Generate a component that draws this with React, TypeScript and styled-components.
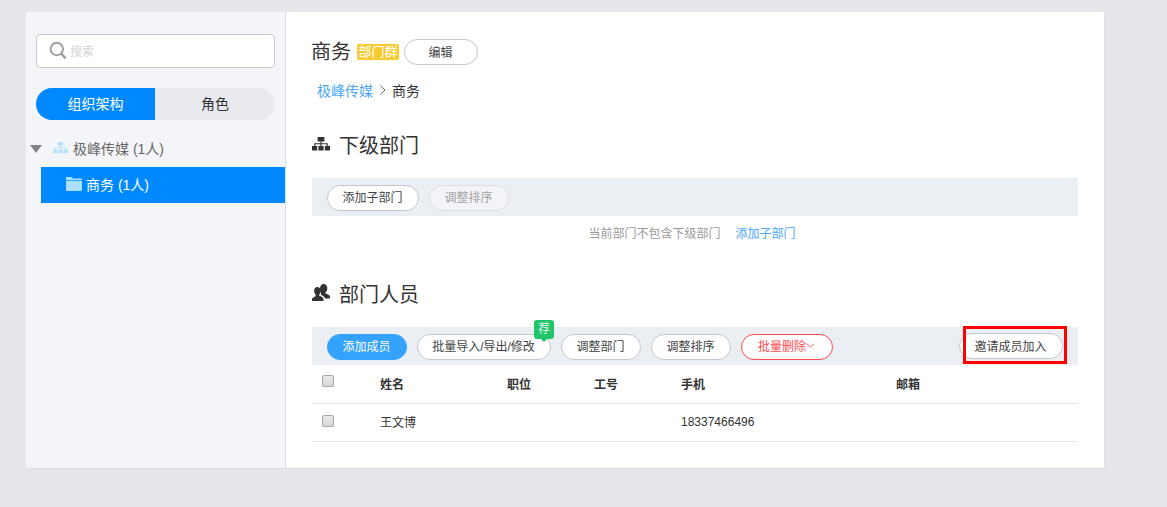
import React from "react";
import styled, { createGlobalStyle } from "styled-components";

const Global = createGlobalStyle`
  html, body { margin: 0; padding: 0; background: #e5e7eb; }
  body { font-family: "Liberation Sans", "Noto Sans CJK SC", sans-serif; color: #333; }
  * { box-sizing: border-box; }
`;

const Page = styled.div`
  width: 1167px;
  height: 507px;
  padding: 12px 0 0 26px;
  overflow: hidden;
`;
const Panel = styled.div`
  width: 1079px;
  height: 457px;
  background: #fff;
  display: flex;
  border-right: 1px solid #dcdee2;
  border-bottom: 1px solid #dcdee2;
  position: relative;
`;
const Sidebar = styled.aside`
  width: 260px;
  flex: none;
  background: #f4f5f8;
  border-right: 1px solid #dcdee2;
  padding: 22px 0 0;
`;
const Search = styled.div`
  margin: 0 10px;
  width: 239px;
  height: 34px;
  background: #fff;
  border: 1px solid #c9cacc;
  border-radius: 4px;
  display: flex;
  align-items: center;
  gap: 3px;
  padding: 0 0 2px 12px;
  font-size: 12px;
  color: #d4d4d4;
`;
const Tabs = styled.div`
  margin: 20px 10px 0;
  width: 239px;
  height: 32px;
  display: flex;
  border-radius: 16px;
  overflow: hidden;
  background: #e8eaef;
  font-size: 14px;
`;
const Tab = styled.div<{ $active?: boolean }>`
  flex: ${(p) => (p.$active ? "0 0 119px" : "1")};
  display: flex;
  align-items: center;
  justify-content: center;
  padding-bottom: 2px;
  background: ${(p) => (p.$active ? "#0089ff" : "transparent")};
  color: ${(p) => (p.$active ? "#fff" : "#333")};
`;
const RootNode = styled.div`
  margin-top: 11px;
  height: 36px;
  display: flex;
  align-items: center;
  padding: 0 0 2px 4px;
  font-size: 14px;
  color: #666;
`;
const RootLabel = styled.span`
  margin-left: 5px;
`;
const Triangle = styled.span`
  width: 0;
  height: 0;
  margin-top: 2px;
  border-left: 6.5px solid transparent;
  border-right: 6.5px solid transparent;
  border-top: 8px solid #7f8388;
  margin-right: 11px;
`;
const Selected = styled.div`
  margin-left: 15px;
  height: 36px;
  background: #0089ff;
  color: #fff;
  display: flex;
  align-items: center;
  padding: 0 0 2px 25px;
  gap: 4px;
  font-size: 14px;
`;
const Main = styled.main`
  flex: 1;
  padding: 27px 26px 0 26px;
  min-width: 0;
`;
const TitleRow = styled.div`
  display: flex;
  align-items: center;
  height: 26px;
`;
const Title = styled.h1`
  margin: 0 0 0 -1px;
  font-size: 20px;
  font-weight: 400;
  line-height: 26px;
  color: #333;
`;
const GroupTag = styled.span`
  margin-left: 6px;
  width: 42px;
  height: 16px;
  background: #f7cb2f;
  border-radius: 2px;
  color: #fff;
  font-size: 13px;
  line-height: 16px;
  text-align: center;
  white-space: nowrap;
`;
const Pill = styled.button<{ $w: number; $kind?: "primary" | "danger" | "muted" }>`
  width: ${(p) => p.$w}px;
  height: 26px;
  flex: none;
  padding: 0 1px 2px 0;
  border-radius: 13px;
  font-family: inherit;
  font-size: 12px;
  display: inline-flex;
  align-items: center;
  justify-content: center;
  white-space: nowrap;
  background: ${(p) => (p.$kind === "primary" ? "#33a3ff" : p.$kind === "muted" ? "#f3f4f7" : "#fff")};
  color: ${(p) =>
    p.$kind === "primary" ? "#fff" : p.$kind === "danger" ? "#ff4b4f" : p.$kind === "muted" ? "#a3a3a3" : "#444"};
  border: 1px solid
    ${(p) =>
      p.$kind === "primary" ? "#33a3ff" : p.$kind === "danger" ? "#ff4b4f" : p.$kind === "muted" ? "#dcdee5" : "#c5c7d0"};
`;
const EditPill = styled(Pill)`
  margin-left: 5px;
`;
const ToolPill = styled(Pill)`
  padding-bottom: 4px;
`;
const InvitePill = styled(Pill)`
  margin: -2px 0 0 auto;
`;
const Crumbs = styled.div`
  margin: 13px 0 0 5px;
  height: 26px;
  display: flex;
  align-items: center;
  padding-bottom: 2px;
  font-size: 14px;
  color: #333;
`;
const CrumbLink = styled.span`
  color: #4aa5f5;
`;
const CrumbSep = styled.span`
  display: inline-flex;
  margin: 0 5px 0 6px;
`;
const SectionHead = styled.div<{ $top: number }>`
  margin-top: ${(p) => p.$top}px;
  height: 28px;
  display: flex;
  align-items: center;
  gap: 9px;
  font-size: 20px;
  color: #333;
`;
const Toolbar = styled.div<{ $top: number }>`
  margin-top: ${(p) => p.$top}px;
  height: 38px;
  background: #ebeef3;
  display: flex;
  align-items: center;
  gap: 10px;
  padding: 2px 15px 0;
  position: relative;
`;
const Empty = styled.div`
  height: 32px;
  display: flex;
  align-items: center;
  justify-content: center;
  gap: 15px;
  font-size: 12px;
  color: #999;
  padding-right: 6px;
`;
const EmptyLink = styled.span`
  color: #4aa5f5;
`;
const Row = styled.div`
  display: grid;
  grid-template-columns: 68px 127px 87px 87px 215px 1fr;
  height: 38px;
  padding-bottom: 2px;
  align-items: center;
  border-bottom: 1px solid #e8e8e8;
  font-size: 12px;
  color: #333;
`;
const HeadRow = styled(Row)`
  height: 39px;
  font-weight: 700;
`;
const Check = styled.span<{ $up?: boolean }>`
  width: 12px;
  height: 12px;
  margin: ${(p) => (p.$up ? "-5px" : "-2px")} 0 0 10px;
  background: linear-gradient(#e9e9e9, #d6d6d6);
  border: 1px solid #a8a8a8;
  border-radius: 2px;
  display: block;
`;
const Badge = styled.span`
  position: absolute;
  left: 222px;
  top: -7px;
  width: 20px;
  height: 19px;
  background: #21c36b;
  border-radius: 3px;
  color: #dff5e7;
  font-size: 12px;
  line-height: 18px;
  text-align: center;
  &::after {
    content: "";
    position: absolute;
    left: 7px;
    bottom: -3px;
    border-left: 3px solid transparent;
    border-right: 3px solid transparent;
    border-top: 3px solid #21c36b;
  }
`;
const Highlight = styled.div`
  position: absolute;
  left: 937px;
  top: 314px;
  width: 104px;
  height: 38px;
  border: 3.5px solid #f00;
  pointer-events: none;
`;

const SearchIcon = () => (
  <svg width="18" height="19" viewBox="0 0 18 19" fill="none" stroke="#a3a09c" strokeWidth="2">
    <circle cx="7.8" cy="8" r="6.2" />
    <path d="M12.3 12.6 L16.6 17.4" strokeWidth="2.4" />
  </svg>
);
const OrgIcon = ({ color, w = 15 }: { color: string; w?: number }) => (
  <svg width={w} height={(w * 12) / 16} viewBox="0 0 16 12" fill={color}>
    <rect x="5" y="0" width="6" height="4" />
    <rect x="0" y="8" width="4.600" height="4" />
    <rect x="5.700" y="8" width="4.600" height="4" />
    <rect x="11.400" y="8" width="4.600" height="4" />
    <path d="M7.500 4h1v1.500h5.500V8h-1V6.500H8.500V8h-1V6.500H3V8H2V5.500h5.500z" />
  </svg>
);
const FolderIcon = () => (
  <svg width="16" height="14" viewBox="0 0 16 14" fill="#a9e0ff">
    <path d="M0 1.2C0 .5.5 0 1.2 0h4.2l1.4 1.6h8c.7 0 1.2.5 1.2 1.2V3H0z" />
    <path d="M0 3.8h16v9c0 .7-.5 1.2-1.2 1.2H1.2C.5 14 0 13.500 0 12.800z" />
  </svg>
);
const UsersIcon = () => (
  <svg width="18" height="18" viewBox="0 0 18 18" fill="#333">
    <path d="M11.600 0c2.300 0 3.700 1.800 3.700 4.200 0 1.700-.7 3.200-1.700 4v1.400c1.600.6 4.400 1.400 4.400 3.400V14.500h-5c-.4-1.700-2.400-2.800-4-3.500V8.800c-.9-.9-1.300-2.500-1.100-4.200C8.100 2 9.400 0 11.600 0z" />
    <path d="M5.400 3c2 0 3.300 1.600 3.300 3.800 0 1.600-.6 2.800-1.400 3.500v1.500c1.900.7 4.200 1.700 4.200 3.500V17H0v-1.700c0-1.600 2.200-2.400 3.600-3V10.300C2.700 9.600 2.100 8.400 2.100 6.800 2.100 4.600 3.400 3 5.400 3z" />
  </svg>
);
const Chevron = ({ color, size }: { color: string; size: number }) => (
  <svg width={size} height={size} viewBox="0 0 10 10" fill="none" stroke={color} strokeWidth="1">
    <path d="M1 3 L5 7 L9 3" />
  </svg>
);
const ChevronRight = () => (
  <svg width="8" height="10" viewBox="0 0 8 10" fill="none" stroke="#666" strokeWidth="1">
    <path d="M1.500 .8 L6 5 L1.500 9.200" />
  </svg>
);

export default function App() {
  return (
    <Page>
      <Global />
      <Panel>
        <Sidebar>
          <Search>
            <SearchIcon />
            搜索
          </Search>
          <Tabs>
            <Tab $active>组织架构</Tab>
            <Tab>角色</Tab>
          </Tabs>
          <RootNode>
            <Triangle />
            <OrgIcon color="#b5e1fb" />
            <RootLabel>极峰传媒 (1人)</RootLabel>
          </RootNode>
          <Selected>
            <FolderIcon />
            商务 (1人)
          </Selected>
        </Sidebar>
        <Main>
          <TitleRow>
            <Title>商务</Title>
            <GroupTag>部门群</GroupTag>
            <EditPill $w={74}>编辑</EditPill>
          </TitleRow>
          <Crumbs>
            <CrumbLink>极峰传媒</CrumbLink>
            <CrumbSep>
              <ChevronRight />
            </CrumbSep>
            商务
          </Crumbs>
          <SectionHead $top={26}>
            <OrgIcon color="#333" w={18} />
            下级部门
          </SectionHead>
          <Toolbar $top={20}>
            <ToolPill $w={92}>添加子部门</ToolPill>
            <ToolPill $w={80} $kind="muted">调整排序</ToolPill>
          </Toolbar>
          <Empty>
            <span>当前部门不包含下级部门</span>
            <EmptyLink>添加子部门</EmptyLink>
          </Empty>
          <SectionHead $top={31}>
            <UsersIcon />
            部门人员
          </SectionHead>
          <Toolbar $top={20}>
            <ToolPill $w={80} $kind="primary">添加成员</ToolPill>
            <ToolPill $w={134}>批量导入/导出/修改</ToolPill>
            <Badge>荐</Badge>
            <ToolPill $w={80}>调整部门</ToolPill>
            <ToolPill $w={80}>调整排序</ToolPill>
            <ToolPill $w={92} $kind="danger">
              批量删除
              <Chevron color="#ff4b4f" size={9} />
            </ToolPill>
            <InvitePill $w={104}>邀请成员加入</InvitePill>
          </Toolbar>
          <HeadRow>
            <Check $up />
            <span>姓名</span>
            <span>职位</span>
            <span>工号</span>
            <span>手机</span>
            <span>邮箱</span>
          </HeadRow>
          <Row>
            <Check />
            <span>王文博</span>
            <span />
            <span />
            <span>18337466496</span>
            <span />
          </Row>
        </Main>
        <Highlight />
      </Panel>
    </Page>
  );
}
